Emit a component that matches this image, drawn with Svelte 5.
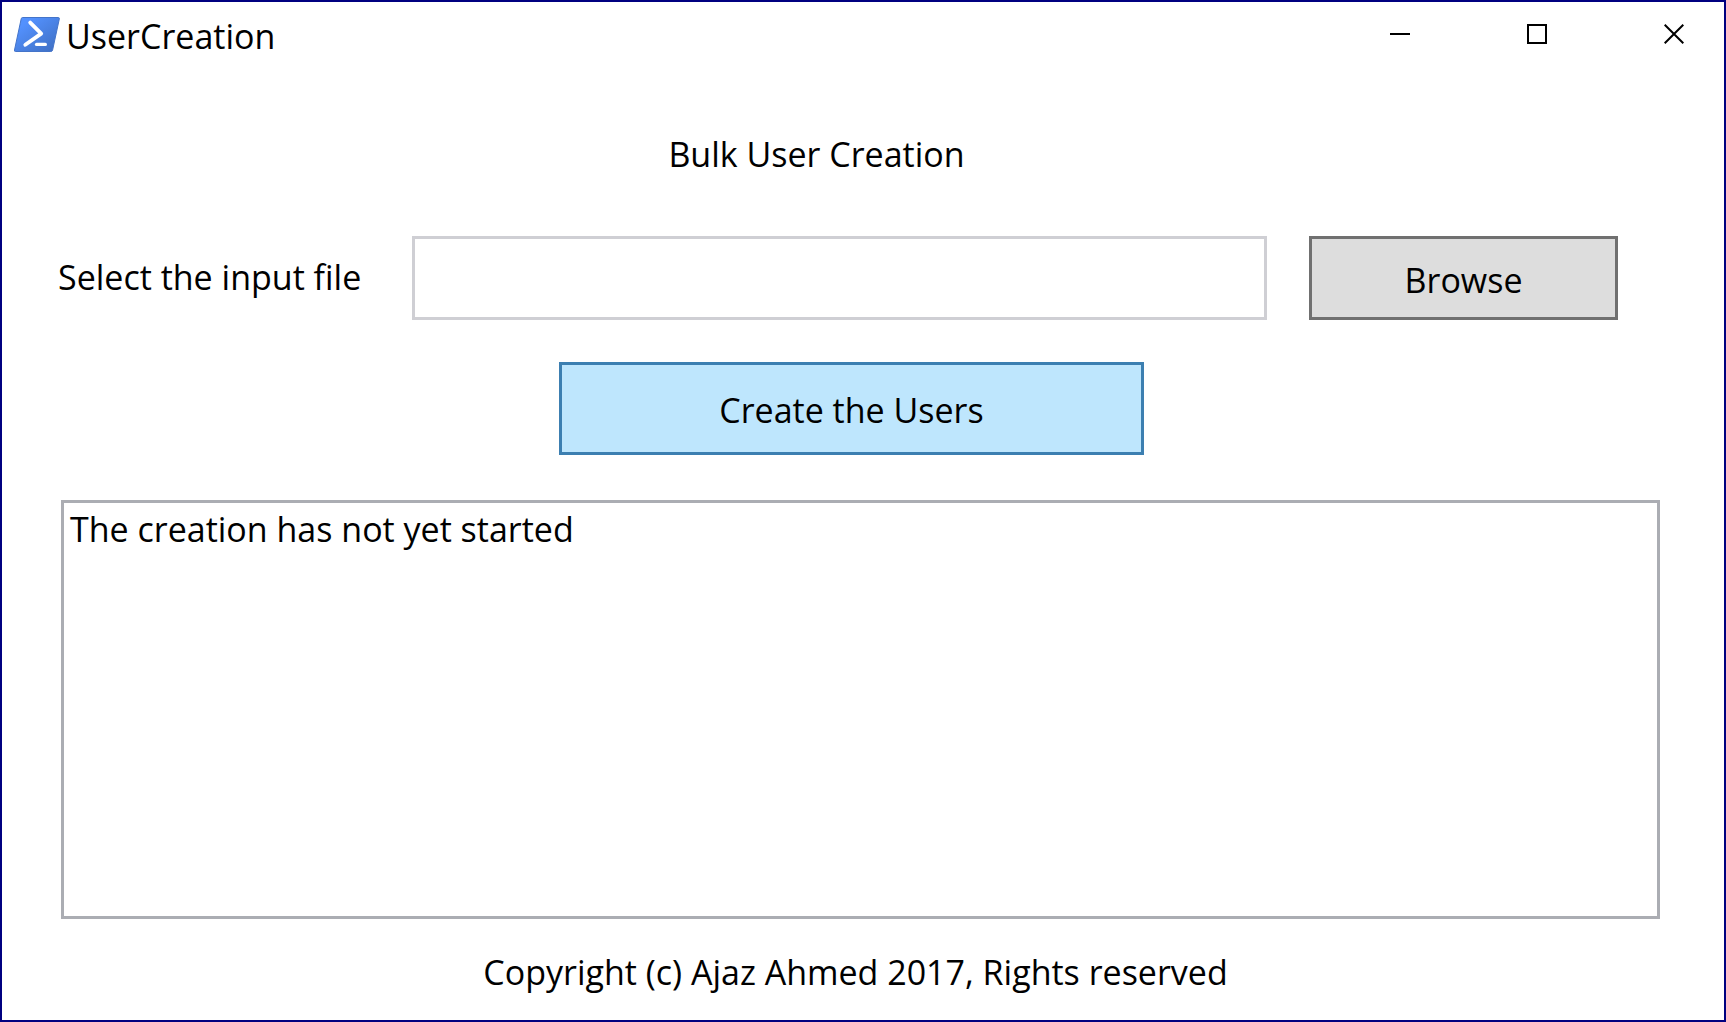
<script>
  let filePath = $state('');
  let log = $state('The creation has not yet started');
  let picker;

  function choose(event) {
    filePath = event.currentTarget.files[0]?.name ?? '';
  }

  function createUsers(event) {
    event.preventDefault();
    log = filePath ? `Creating users from ${filePath}` : 'Select an input file first';
  }
</script>

<div class="window">
  <header class="titlebar">
    <svg class="logo" viewBox="0 0 46 35" aria-hidden="true">
      <defs>
        <linearGradient id="shell" x1="0" y1="0" x2="1" y2="1">
          <stop offset="0.2" stop-color="#5391fe" />
          <stop offset="1" stop-color="#3e6dbf" />
        </linearGradient>
      </defs>
      <path d="M8.6 0.5H44.2Q45.7 0.5 45.3 2L38.6 33Q38.2 34.5 36.8 34.5H1.4Q0.2 34.5 0.5 33L7.2 1.8Q7.5 0.5 8.6 0.5Z" fill="url(#shell)" stroke="#4474c9" stroke-width="1" />
      <path d="M16.2 5.6L27.2 16.6L11.3 27.8" fill="none" stroke="#fff" stroke-width="3.8" stroke-linecap="round" stroke-linejoin="round" />
      <path d="M22.6 27.4H31.3" fill="none" stroke="#fff" stroke-width="3.4" stroke-linecap="round" />
    </svg>
    <span class="title">UserCreation</span>
    <div class="controls">
      <button type="button" aria-label="Minimize">
        <svg viewBox="0 0 20 20"><path d="M0 10H20" /></svg>
      </button>
      <button type="button" aria-label="Maximize">
        <svg viewBox="0 0 20 20"><path d="M1 1H19V19H1Z" /></svg>
      </button>
      <button type="button" aria-label="Close">
        <svg viewBox="0 0 20 20"><path d="M0.7 0.7L19.3 19.3M19.3 0.7L0.7 19.3" /></svg>
      </button>
    </div>
  </header>

  <main>
    <h1>Bulk User Creation</h1>
    <form onsubmit={createUsers}>
      <div class="file-row">
        <label for="file-path">Select the input file</label>
        <input id="file-path" type="text" bind:value={filePath} />
        <button type="button" class="browse" onclick={() => picker.click()}>Browse</button>
        <input bind:this={picker} type="file" hidden onchange={choose} />
      </div>
      <div class="submit-row">
        <button type="submit" class="create">Create the Users</button>
      </div>
    </form>
    <textarea class="log" aria-label="Progress" readonly value={log}></textarea>
  </main>

  <footer>Copyright (c) Ajaz Ahmed 2017, Rights reserved</footer>
</div>

<style>
  :global(body) {
    margin: 0;
    background: #fff;
  }

  .window {
    box-sizing: border-box;
    min-height: 100vh;
    display: flex;
    flex-direction: column;
    border: 2px solid #000080;
    background: #fff;
    color: #000;
    font-family: 'Segoe UI', 'Open Sans', 'Noto Sans', sans-serif;
    font-size: 34px;
    line-height: 48px;
  }

  button,
  input,
  textarea {
    box-sizing: border-box;
    margin: 0;
    border-radius: 0;
    font: inherit;
    color: inherit;
    outline: none;
  }

  .titlebar {
    display: flex;
    align-items: center;
    height: 64px;
    padding-left: 12px;
  }

  .logo {
    width: 46px;
    height: 35px;
    margin-right: 6px;
  }

  .title {
    padding-top: 4px;
  }

  .controls {
    display: flex;
    gap: 37px;
    height: 100%;
    margin-left: auto;
  }

  .controls button {
    display: flex;
    align-items: center;
    justify-content: center;
    width: 100px;
    padding: 0;
    border: 0;
    background: transparent;
  }

  .controls svg {
    width: 20px;
    height: 20px;
    fill: none;
    stroke: #000;
    stroke-width: 2;
  }

  main {
    flex: 1;
    display: flex;
    flex-direction: column;
    padding: 64px 64px 0 59px;
  }

  h1 {
    margin: 0;
    padding-right: 88px;
    font: inherit;
    text-align: center;
  }

  .file-row {
    display: flex;
    align-items: stretch;
    margin-top: 58px;
    padding-right: 42px;
  }

  .file-row label {
    box-sizing: border-box;
    flex: none;
    width: 351px;
    padding-top: 17px;
    margin-left: -3px;
    margin-right: 3px;
  }

  #file-path {
    flex: 1;
    min-width: 0;
    height: 84px;
    padding: 0 8px;
    border: 3px solid #cfcfd4;
    background: #fff;
  }

  .browse {
    width: 309px;
    margin-left: 42px;
    padding: 4px 0 0;
    border: 3px solid #707070;
    background: #ddd;
  }

  .submit-row {
    display: flex;
    justify-content: center;
    margin: 42px 0 45px;
    padding-right: 18px;
  }

  .create {
    width: 585px;
    height: 93px;
    padding: 2px 0 0;
    border: 3px solid #3c7fb1;
    background: #bee6fd;
  }

  .log {
    flex: 1;
    display: block;
    width: 100%;
    min-height: 160px;
    padding: 2px 6px;
    border: 3px solid #abadb3;
    background: #fff;
    resize: none;
  }

  footer {
    padding: 29px 74px 24px 59px;
    text-align: center;
  }
</style>
